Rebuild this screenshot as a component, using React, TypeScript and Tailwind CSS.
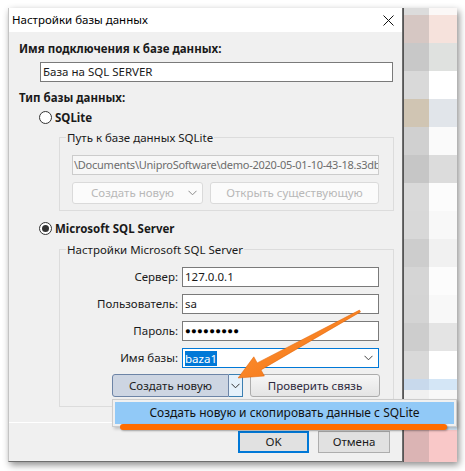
import React from "react"

// pixelated strip of the window behind the dialog: [height, left cell, right cell]
const backdrop: [string, string, string][] = [
  ["h-[7px]", "bg-[#dcdcdc]", "bg-[#fbf8f7]"],
  ["h-[28px]", "bg-[#d6c7c3]", "bg-[#f6e2dc]"],
  ["h-[28px]", "bg-[#c8c8c8]", "bg-[#dfe1df]"],
  ["h-[28px]", "bg-[#d9d9d9]", "bg-[#ffffff]"],
  ["h-[28px]", "bg-[#d0c5b3]", "bg-[#e1e5ea]"],
  ["h-[28px]", "bg-[#d0d0d0]", "bg-[#fafafa]"],
  ["h-[28px]", "bg-[#c6c6c6]", "bg-[#dcdcdc]"],
  ["h-[28px]", "bg-[#d9d9d9]", "bg-[#fcfcfc]"],
  ["h-[28px]", "bg-[#d8d8d8]", "bg-[#f8f8f8]"],
  ["h-[28px]", "bg-[#cdcdcd]", "bg-[#f1f1f1]"],
  ["h-[28px]", "bg-[#d5d5d5]", "bg-[#fcfcfc]"],
  ["h-[28px]", "bg-[#d4d4d4]", "bg-[#f8f8f8]"],
  ["h-[28px]", "bg-[#cdcdcd]", "bg-[#e4e4e4]"],
  ["h-[28px]", "bg-[#d9d9d9]", "bg-[#ffffff]"],
  ["h-[11px]", "bg-[#c8d9ec]", "bg-[#d4e6f6]"],
  ["h-[30px]", "bg-[#f0f0f0]", "bg-[#f8f8f8]"],
  ["h-[10px]", "bg-[#c8d9ec]", "bg-[#d4e6f6]"],
  ["h-[32px]", "bg-[#dbb4b4]", "bg-[#f9c8c8]"],
]

function Chevron({ className = "" }: { className?: string }) {
  return (
    <svg width="9" height="6" viewBox="0 0 9 6" className={className}>
      <path d="M0.5 0.8 L4.5 4.8 L8.5 0.8" fill="none" stroke="currentColor" strokeWidth="1" />
    </svg>
  )
}

function Radio({ checked }: { checked?: boolean }) {
  return (
    <span className="w-[13px] h-[13px] rounded-full border border-[#333] bg-white flex items-center justify-center shrink-0">
      {checked && <span className="w-[7px] h-[7px] rounded-full bg-[#333]" />}
    </span>
  )
}

function Field({ label, children, blue }: { label: string; children: React.ReactNode; blue?: boolean }) {
  return (
    <div className="flex items-center h-[20px]">
      <div className="w-[119px] text-right pr-[1px]">{label}</div>
      <div
        className={
          "ml-[3px] w-[197px] h-full bg-white border flex items-center px-[2px] " +
          (blue ? "border-[#0078d7]" : "border-[#7a7a7a]")
        }
      >
        {children}
      </div>
    </div>
  )
}

export default function App() {
  return (
    <div className="relative w-[465px] h-[471px] bg-white overflow-hidden font-['Noto_Sans',sans-serif] text-[11.5px] text-[#1a1a1a]">
      <div className="absolute left-[8px] top-[8px] flex w-[449px] h-[454px] shadow-[2px_3px_7px_rgba(0,0,0,0.45)]">
        {/* dialog */}
        <div className="w-[395px] h-full flex flex-col bg-[#f0f0f0] border-r border-b border-[#6e6e6e] border-l border-l-[#c4c4c4]">
          <div className="h-[24px] bg-white flex items-center justify-between pl-[3px] pr-[8px] shrink-0">
            <span className="text-[11.5px] text-black">Настройки базы данных</span>
            <svg width="11" height="11" viewBox="0 0 11 11">
              <path d="M0.5 0.5 L10.5 10.5 M10.5 0.5 L0.5 10.5" stroke="#111" strokeWidth="1" />
            </svg>
          </div>

          <div className="flex-1 flex flex-col pl-[10px]">
            <div className="mt-[9px] h-[15px] leading-[15px] font-bold">Имя подключения к базе данных:</div>
            <div className="mt-[6px] ml-[21px] w-[353px] h-[20px] bg-white border border-[#7a7a7a] flex items-center px-[2px]">
              База на SQL SERVER
            </div>
            <div className="mt-[8px] h-[15px] leading-[15px] font-bold">Тип базы данных:</div>

            <div className="mt-[5px] ml-[20px] h-[15px] flex items-center gap-[3px] font-bold">
              <Radio />
              <span>SQLite</span>
            </div>

            <fieldset className="mt-[5px] ml-[40px] w-[335px] border border-[#dcdcdc] pb-[6px]">
              <legend className="ml-[6px] px-[1px] leading-[15px] text-[#1a1a1a]">Путь к базе данных SQLite</legend>
              <div className="mt-[10px] ml-[12px] w-[307px] h-[20px] border border-[#cccccc] bg-[#f7f7f7] text-[#6d6d6d] text-[11px] tracking-[-0.25px] flex items-center px-[1px] whitespace-nowrap overflow-hidden">
                \Documents\UniproSoftware\demo-2020-05-01-10-43-18.s3db
              </div>
              <div className="mt-[7px] ml-[12px] flex gap-[7px] h-[22px] text-[#b8b8b8]">
                <div className="w-[131px] h-full rounded-[3px] border border-[#dadada] bg-[#fbfbfb] flex items-center relative">
                  <span className="flex-1 text-center pr-[10px]">Создать новую</span>
                  <Chevron className="absolute right-[5px] text-[#8a8a8a]" />
                </div>
                <div className="w-[169px] h-full rounded-[3px] border border-[#dadada] bg-[#fbfbfb] flex items-center justify-center">
                  Открыть существующую
                </div>
              </div>
            </fieldset>

            <div className="mt-[10px] ml-[20px] h-[15px] flex items-center gap-[3px] font-bold">
              <Radio checked />
              <span>Microsoft SQL Server</span>
            </div>

            <fieldset className="mt-[6px] ml-[40px] w-[335px] border border-[#dcdcdc] pb-[9px]">
              <legend className="ml-[6px] px-[1px] leading-[15px]">Настройки Microsoft SQL Server</legend>
              <div className="mt-[10px] flex flex-col gap-[7px]">
                <Field label="Сервер:">127.0.0.1</Field>
                <Field label="Пользователь:">sa</Field>
                <Field label="Пароль:">
                  <span className="text-[9.5px] tracking-[0.3px] text-black">●●●●●●●●●</span>
                </Field>
                <Field label="Имя базы:" blue>
                  <span className="bg-[#0078d7] text-white leading-[15px]">baza1</span>
                  <Chevron className="ml-auto mr-[3px] text-[#444]" />
                </Field>
              </div>
              <div className="mt-[6px] ml-[52px] flex gap-[7px] h-[23px]">
                <div className="w-[131px] h-full flex">
                  <div className="flex-1 rounded-l-[3px] border border-[#6d84a6] bg-[#cdd5e2] flex items-center justify-center text-[#222]">
                    Создать новую
                  </div>
                  <div className="w-[14px] border border-l-0 border-[#3c7fb1] bg-[#e5f1fb] flex items-center justify-center text-[#333]">
                    <Chevron />
                  </div>
                </div>
                <div className="w-[130px] h-full rounded-[3px] border border-[#acacac] bg-gradient-to-b from-[#f6f6f6] to-[#e4e4e4] flex items-center justify-center text-[#2e2a40]">
                  Проверить связь
                </div>
              </div>
            </fieldset>
          </div>

          <div className="h-[39px] shrink-0 border-t border-white flex justify-end gap-[9px] pt-[8px] pr-[12px]">
            <div className="w-[71px] h-[22px] bg-[#e1e1e1] border-2 border-[#0078d7] flex items-center justify-center">OK</div>
            <div className="w-[72px] h-[22px] bg-[#e1e1e1] border border-[#adadad] flex items-center justify-center">Отмена</div>
          </div>
        </div>

        {/* window behind */}
        <div className="flex-1 flex flex-col border-l border-[#555]">
          {backdrop.map(([h, a, b], i) => (
            <div key={i} className={"flex " + h}>
              <div className={"w-[25px] " + a} />
              <div className={"flex-1 " + b} />
            </div>
          ))}
        </div>
      </div>

      {/* dropdown menu of the split button */}
      <div className="absolute left-[112px] top-[399px] w-[345px] h-[28px] bg-[#f0f0f0] border border-[#cccccc] shadow-[2px_2px_3px_rgba(0,0,0,0.2)] p-[2px]">
        <div className="h-full bg-[#91c9f7] flex items-center justify-center text-[12px] text-[#111]">
          Создать новую и скопировать данные с SQLite
        </div>
      </div>

      {/* orange highlight underline */}
      <div className="absolute left-[120px] top-[424px] w-[327px] h-[6px] rounded-full bg-[#ff6d00] shadow-[1px_1px_2px_rgba(0,0,0,0.3)]" />

      {/* orange pointer arrow */}
      <svg className="absolute left-0 top-0 pointer-events-none" width="465" height="471" viewBox="0 0 465 471">
        <defs>
          <linearGradient id="arrowFill" x1="0" y1="0" x2="1" y2="1">
            <stop offset="0" stopColor="#ff9a3c" />
            <stop offset="1" stopColor="#f26c0c" />
          </linearGradient>
        </defs>
        <polygon
          points="360.5,311.9 261.0,369.9 264.4,376.0 238.1,378.0 253.8,356.8 257.2,362.9 359.5,310.1"
          fill="url(#arrowFill)"
          stroke="#e06000"
          strokeWidth="0.5"
          strokeLinejoin="round"
        />
      </svg>
    </div>
  )
}
